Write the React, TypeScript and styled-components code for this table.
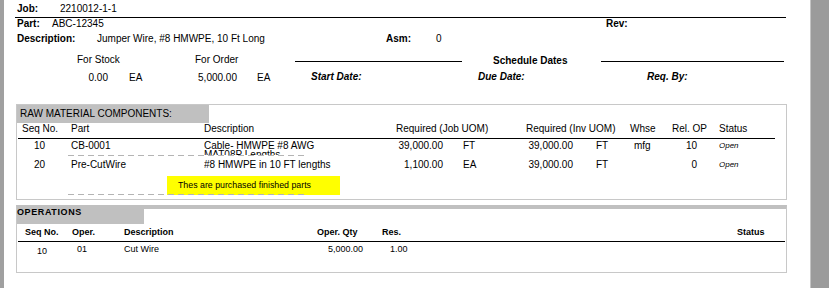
import React from 'react';
import styled, { createGlobalStyle } from 'styled-components';

const GlobalStyle = createGlobalStyle`
  html, body {
    margin: 0;
    padding: 0;
    background: #fff;
  }

  body {
    font-family: "Liberation Sans", Arial, sans-serif;
    color: #000;
  }
`;

const Viewer = styled.div`
  width: 829px;
  height: 288px;
  display: flex;
  overflow: hidden;
`;

const LeftEdge = styled.div`
  width: 4px;
  flex-shrink: 0;
  background: #a0a0a0;
`;

const RightEdge = styled.div`
  width: 18px;
  flex-shrink: 0;
  background: #9b9b9b;
  border-left: 1px solid #c4c4c4;
`;

const Page = styled.div`
  flex: 1;
  padding: 3px 0 0 11px;
  background: #fff;
  font-size: 10px;
`;

// Job / Part / Description header lines
const InfoRow = styled.div<{ $gap?: number; $ruled?: boolean }>`
  display: flex;
  margin-top: ${(p) => p.$gap || 0}px;
  padding: 0 0 ${(p) => (p.$ruled ? 2 : 0)}px 2px;
  width: 771px;
  box-sizing: border-box;

  line-height: 12px;
  white-space: nowrap;
  border-bottom: ${(p) => (p.$ruled ? '1px solid #000' : 'none')};
`;

const Label = styled.span<{ $width?: number; $italic?: boolean }>`
  flex-shrink: 0;
  width: ${(p) => (p.$width ? `${p.$width}px` : 'auto')};

  font-weight: 700;
  font-style: ${(p) => (p.$italic ? 'italic' : 'normal')};
`;

const Value = styled.span<{ $width?: number; $right?: boolean; $indent?: number }>`
  flex-shrink: 0;
  width: ${(p) => (p.$width ? `${p.$width}px` : 'auto')};
  padding-left: ${(p) => p.$indent || 0}px;
  box-sizing: border-box;
  text-align: ${(p) => (p.$right ? 'right' : 'left')};
`;

const Summary = styled.div`
  display: flex;
`;

const QtyBlock = styled.div`
  width: 280px;
  padding-top: 9px;
`;

const QtyLine = styled.div<{ $gap?: number }>`
  display: flex;
  margin-top: ${(p) => p.$gap || 0}px;
  padding-left: 62px;
  line-height: 12px;
  white-space: nowrap;
`;

const ScheduleBlock = styled.div`
  width: 491px;
  padding-top: 10px;
`;

const ScheduleTitle = styled.div`
  display: flex;
  align-items: center;
  line-height: 12px;
`;

const Rule = styled.div<{ $width: number }>`
  width: ${(p) => p.$width}px;
  height: 1px;
  background: #000;
`;

const TitleText = styled.span`
  width: 139px;
  padding-left: 31px;
  box-sizing: border-box;
  font-weight: 700;
  white-space: nowrap;
`;

const DatesLine = styled.div`
  display: flex;
  margin-top: 4px;
  padding-left: 16px;
  line-height: 12px;
  white-space: nowrap;
`;

// Report sections
const Section = styled.div<{ $gap: number; $heavyTop?: boolean; $padBottom: number }>`
  width: 771px;
  margin: ${(p) => p.$gap}px 0 0 1px;
  padding-bottom: ${(p) => p.$padBottom}px;
  box-sizing: border-box;

  border: 1px solid #c8c8c8;
  border-top: ${(p) => (p.$heavyTop ? '4px solid #c0c0c0' : '1px solid #c8c8c8')};
`;

const RawBar = styled.div`
  width: 192px;
  height: 18px;
  padding-left: 3px;
  box-sizing: border-box;

  background: #c0c0c0;
  line-height: 18px;
  font-size: 10px;
  white-space: nowrap;
`;

const OpsBar = styled.div`
  width: 127px;
  height: 19px;
  margin-top: -4px;

  background: #c0c0c0;
  line-height: 14px;
  font-size: 9px;
  font-weight: 700;
  letter-spacing: 0.6px;
`;

const Grid = styled.div<{ $cols: string; $width: number; $head?: boolean; $bold?: boolean; $size: number; $line: number; $padTop?: number }>`
  display: grid;
  grid-template-columns: ${(p) => p.$cols};
  align-items: start;
  width: ${(p) => p.$width}px;
  margin-left: 1px;
  padding-top: ${(p) => p.$padTop || 0}px;
  padding-bottom: ${(p) => (p.$head ? 3 : 0)}px;

  font-size: ${(p) => p.$size}px;
  font-weight: ${(p) => (p.$bold ? 700 : 400)};
  line-height: ${(p) => p.$line}px;
  border-bottom: ${(p) => (p.$head ? '1px solid #000' : 'none')};
`;

const Cell = styled.div<{ $indent?: number; $right?: boolean; $drop?: number }>`
  padding-left: ${(p) => p.$indent || 0}px;
  padding-top: ${(p) => p.$drop || 0}px;
  text-align: ${(p) => (p.$right ? 'right' : 'left')};
  white-space: nowrap;
`;

// the description box keeps its height, so a second line is cut
const DescCell = styled.div`
  height: 16px;
  overflow: hidden;
  white-space: nowrap;
`;

const Overflow = styled.div`
  margin-top: -4px;
`;

const StatusCell = styled.div`
  padding-left: 22px;
  font-size: 8px;
  font-style: italic;
  white-space: nowrap;
`;

const Dashes = styled.div<{ $overlap?: boolean }>`
  width: 238px;
  height: 1px;
  margin: ${(p) => (p.$overlap ? -1 : 0)}px 0 0 51px;
  position: relative;

  background: repeating-linear-gradient(to right, #b4b4b4 0 6px, transparent 6px 10px);
`;

const Note = styled.div`
  width: 173px;
  height: 19px;
  margin: 2px 0 0 150px;
  padding-left: 11px;
  box-sizing: border-box;

  background: #ffff00;
  font-size: 8.8px;
  line-height: 19px;
  white-space: nowrap;
`;

interface Material {
  seq: string;
  part: string;
  description: string;
  more?: string;
  jobQty: string;
  jobUom: string;
  invQty: string;
  invUom: string;
  whse: string;
  relOp: string;
}

const materials: Material[] = [
  {
    seq: '10',
    part: 'CB-0001',
    description: 'Cable- HMWPE #8 AWG',
    more: 'MAT08P Lengths',
    jobQty: '39,000.00',
    jobUom: 'FT',
    invQty: '39,000.00',
    invUom: 'FT',
    whse: 'mfg',
    relOp: '10',
  },
  {
    seq: '20',
    part: 'Pre-CutWire',
    description: '#8 HMWPE in 10 FT lengths',
    jobQty: '1,100.00',
    jobUom: 'EA',
    invQty: '39,000.00',
    invUom: 'FT',
    whse: '',
    relOp: '0',
  },
];

const rawHeadCols = '53px 133px 192px 130px 104px 42px 47px 56px';
const rawRowCols = '53px 133px 176px 63px 67px 63px 57px 42px 25px 78px';
const opsCols = '54px 52px 193px 46px 374px 48px';

function MaterialRow({ item, padTop }: { item: Material; padTop: number }) {
  return (
    <Grid $cols={rawRowCols} $width={757} $size={10} $line={13} $padTop={padTop}>
      <Cell $indent={16}>{item.seq}</Cell>
      <Cell>{item.part}</Cell>
      <DescCell>
        <div>{item.description}</div>
        {item.more && <Overflow>{item.more}</Overflow>}
      </DescCell>
      <Cell $right>{item.jobQty}</Cell>
      <Cell $indent={20}>{item.jobUom}</Cell>
      <Cell $right>{item.invQty}</Cell>
      <Cell $indent={23}>{item.invUom}</Cell>
      <Cell $indent={4}>{item.whse}</Cell>
      <Cell $right>{item.relOp}</Cell>
      <StatusCell>Open</StatusCell>
    </Grid>
  );
}

function App() {
  return (
    <Viewer>
      <GlobalStyle />
      <LeftEdge />

      <Page>
        <InfoRow $ruled>
          <Label $width={43}>Job:</Label>
          <Value>2210012-1-1</Value>
        </InfoRow>

        <InfoRow>
          <Label $width={35}>Part:</Label>
          <Value $width={554}>ABC-12345</Value>
          <Label>Rev:</Label>
        </InfoRow>

        <InfoRow $gap={3}>
          <Label $width={80}>Description:</Label>
          <Value $width={289}>Jumper Wire, #8 HMWPE, 10 Ft Long</Value>
          <Label $width={50}>Asm:</Label>
          <Value>0</Value>
        </InfoRow>

        <Summary>
          <QtyBlock>
            <QtyLine>
              <Value $width={118}>For Stock</Value>
              <Value>For Order</Value>
            </QtyLine>
            <QtyLine $gap={6}>
              <Value $width={31} $right>0.00</Value>
              <Value $width={87} $indent={21}>EA</Value>
              <Value $width={42} $right>5,000.00</Value>
              <Value $indent={20}>EA</Value>
            </QtyLine>
          </QtyBlock>

          <ScheduleBlock>
            <ScheduleTitle>
              <Rule $width={167} />
              <TitleText>Schedule Dates</TitleText>
              <Rule $width={183} />
            </ScheduleTitle>
            <DatesLine>
              <Label $width={167} $italic>Start Date:</Label>
              <Label $width={169} $italic>Due Date:</Label>
              <Label $italic>Req. By:</Label>
            </DatesLine>
          </ScheduleBlock>
        </Summary>

        <Section $gap={20} $padBottom={4}>
          <RawBar>RAW MATERIAL COMPONENTS:</RawBar>

          <Grid $cols={rawHeadCols} $width={757} $size={10} $line={12} $head>
            <Cell $indent={4}>Seq No.</Cell>
            <Cell>Part</Cell>
            <Cell>Description</Cell>
            <Cell>Required (Job UOM)</Cell>
            <Cell>Required (Inv UOM)</Cell>
            <Cell>Whse</Cell>
            <Cell>Rel. OP</Cell>
            <Cell>Status</Cell>
          </Grid>

          <MaterialRow item={materials[0]} padTop={0} />
          <Dashes />
          <MaterialRow item={materials[1]} padTop={2} />
          <Note>Thes are purchased finished parts</Note>
          <Dashes $overlap />
        </Section>

        <Section $gap={5} $heavyTop $padBottom={15}>
          <OpsBar>OPERATIONS</OpsBar>

          <Grid $cols={opsCols} $width={767} $size={9} $line={12} $padTop={2} $bold $head>
            <Cell $indent={7}>Seq No.</Cell>
            <Cell>Oper.</Cell>
            <Cell>Description</Cell>
            <Cell>Oper. Qty</Cell>
            <Cell $indent={19}>Res.</Cell>
            <Cell>Status</Cell>
          </Grid>

          <Grid $cols={opsCols} $width={767} $size={9} $line={12} $padTop={1}>
            <Cell $indent={19} $drop={2}>10</Cell>
            <Cell $indent={5}>01</Cell>
            <Cell>Cut Wire</Cell>
            <Cell $right>5,000.00</Cell>
            <Cell $indent={27}>1.00</Cell>
            <Cell />
          </Grid>
        </Section>
      </Page>

      <RightEdge />
    </Viewer>
  );
}

export default App;
